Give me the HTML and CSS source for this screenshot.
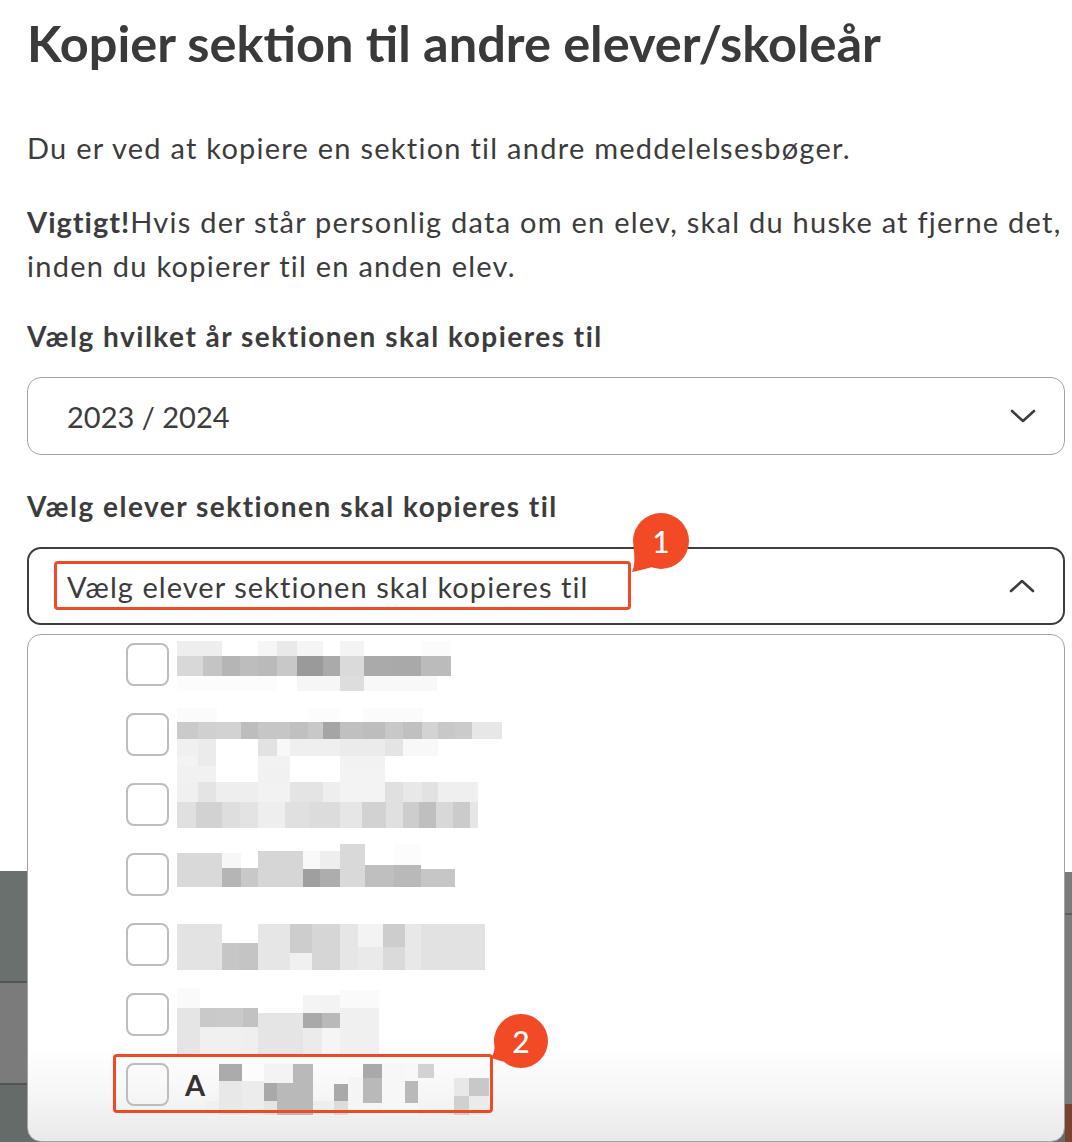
FILE: index.html
```html
<!DOCTYPE html>
<html lang="da">
<head>
<meta charset="utf-8">
<title>Kopier sektion</title>
<link rel="stylesheet" href="styles.css">
</head>
<body>
<main class="modal">
  <h1 class="title">Kopier sektion til andre elever/skoleår</h1>
  <p class="text intro">Du er ved at kopiere en sektion til andre meddelelsesbøger.</p>
  <p class="text warn"><strong class="strong">Vigtigt!</strong>Hvis der står personlig data om en elev, skal du huske at fjerne det, inden du kopierer til en anden elev.</p>

  <label class="label label-year">Vælg hvilket år sektionen skal kopieres til</label>
  <div class="select select-year">
    <span class="select-value">2023 / 2024</span>
    <svg class="chev" viewBox="0 0 26 14" width="26" height="14"><path d="M2 2 L13 12 L24 2" /></svg>
  </div>

  <label class="label label-students">Vælg elever sektionen skal kopieres til</label>
  <div class="select select-students">
    <span class="select-value placeholder">Vælg elever sektionen skal kopieres til</span>
    <svg class="chev" viewBox="0 0 26 14" width="26" height="14"><path d="M2 12 L13 2 L24 12" /></svg>
    <div class="annot annot-1"></div>
    <div class="badge badge-1">
      <svg viewBox="0 0 62 62" width="62" height="62"><circle cx="33" cy="29" r="28"/><path d="M5.4 33.9 Q 8 52 4 60 Q 14 58 23.4 55.3 Z"/></svg>
      <span class="badge-num">1</span>
    </div>
  </div>

  <div class="panel">
    <ul class="list">
      <li class="row">
        <span class="box"></span>
        <svg class="pix" viewBox="0 0 330 64" width="330" height="64">
          <rect x="0" y="9" width="45" height="15" fill="#eeeeee"/><rect x="81" y="9" width="19" height="15" fill="#f6f6f6"/><rect x="100" y="9" width="20" height="15" fill="#e9e9e9"/><rect x="120" y="9" width="26" height="15" fill="#f5f5f5"/><rect x="163" y="9" width="24" height="15" fill="#f4f4f4"/><rect x="244" y="9" width="30" height="15" fill="#fbfbfb"/>
          <rect x="0" y="24" width="26" height="20" fill="#d8d8d8"/><rect x="26" y="24" width="19" height="20" fill="#c4c4c4"/><rect x="45" y="24" width="18" height="20" fill="#b5b5b5"/><rect x="63" y="24" width="18" height="20" fill="#bdbdbd"/><rect x="81" y="24" width="19" height="20" fill="#bababa"/><rect x="100" y="24" width="20" height="20" fill="#c8c8c8"/><rect x="120" y="24" width="26" height="20" fill="#9a9a9a"/><rect x="146" y="24" width="17" height="20" fill="#aaaaaa"/><rect x="163" y="24" width="24" height="20" fill="#dadada"/><rect x="187" y="24" width="29" height="20" fill="#aaaaaa"/><rect x="216" y="24" width="28" height="20" fill="#a9a9a9"/><rect x="244" y="24" width="30" height="20" fill="#bbbbbb"/>
          <rect x="0" y="44" width="100" height="15" fill="#fcfcfc"/><rect x="120" y="44" width="43" height="15" fill="#f6f6f6"/><rect x="163" y="44" width="24" height="15" fill="#dddddd"/><rect x="187" y="44" width="73" height="15" fill="#f8f8f8"/>
        </svg>
      </li>
      <li class="row">
        <span class="box"></span>
        <svg class="pix" viewBox="0 0 330 64" width="330" height="64">
          <rect x="0" y="6" width="40" height="14" fill="#fbfbfb"/><rect x="131" y="6" width="32" height="14" fill="#fcfcfc"/><rect x="186" y="6" width="60" height="14" fill="#fbfbfb"/>
          <rect x="0" y="20" width="21" height="17" fill="#cacaca"/><rect x="21" y="20" width="18" height="17" fill="#d0d0d0"/><rect x="39" y="20" width="25" height="17" fill="#d2d2d2"/><rect x="64" y="20" width="17" height="17" fill="#bdbdbd"/><rect x="81" y="20" width="19" height="17" fill="#c6c6c6"/><rect x="100" y="20" width="13" height="17" fill="#c6c6c6"/><rect x="113" y="20" width="18" height="17" fill="#c0c0c0"/><rect x="131" y="20" width="15" height="17" fill="#c8c8c8"/><rect x="146" y="20" width="17" height="17" fill="#a5a5a5"/><rect x="163" y="20" width="23" height="17" fill="#c0c0c0"/><rect x="186" y="20" width="22" height="17" fill="#bdbdbd"/><rect x="208" y="20" width="18" height="17" fill="#c8c8c8"/><rect x="226" y="20" width="19" height="17" fill="#c0c0c0"/><rect x="245" y="20" width="16" height="17" fill="#d3d3d3"/><rect x="261" y="20" width="17" height="17" fill="#c8c8c8"/><rect x="278" y="20" width="17" height="17" fill="#cbcbcb"/><rect x="295" y="20" width="30" height="17" fill="#e7e7e7"/>
          <rect x="0" y="37" width="21" height="17" fill="#f0f0f0"/><rect x="21" y="37" width="18" height="30" fill="#ebebeb"/><rect x="81" y="37" width="19" height="17" fill="#e2e2e2"/><rect x="100" y="37" width="13" height="17" fill="#f8f8f8"/><rect x="113" y="37" width="50" height="17" fill="#efefef"/><rect x="163" y="37" width="45" height="17" fill="#ebebeb"/><rect x="208" y="37" width="18" height="17" fill="#e4e4e4"/><rect x="226" y="37" width="35" height="17" fill="#f8f8f8"/>
          <rect x="0" y="54" width="21" height="14" fill="#f3f3f3"/><rect x="81" y="54" width="32" height="14" fill="#f2f2f2"/><rect x="163" y="54" width="45" height="14" fill="#f2f2f2"/>
        </svg>
      </li>
      <li class="row">
        <span class="box"></span>
        <svg class="pix" viewBox="0 0 330 64" width="330" height="64">
          <rect x="0" y="-6" width="39" height="16" fill="#f1f1f1"/><rect x="81" y="-6" width="32" height="16" fill="#f1f1f1"/><rect x="163" y="-6" width="45" height="16" fill="#f3f3f3"/>
          <rect x="0" y="10" width="21" height="20" fill="#f0f0f0"/><rect x="21" y="10" width="18" height="20" fill="#e4e4e4"/><rect x="39" y="10" width="42" height="20" fill="#eeeeee"/><rect x="81" y="10" width="32" height="20" fill="#f2f2f2"/><rect x="113" y="10" width="33" height="20" fill="#e4e4e4"/><rect x="146" y="10" width="17" height="20" fill="#eeeeee"/><rect x="163" y="10" width="45" height="20" fill="#f3f3f3"/><rect x="208" y="10" width="18" height="20" fill="#e0e0e0"/><rect x="226" y="10" width="19" height="20" fill="#e8e8e8"/><rect x="245" y="10" width="16" height="20" fill="#e2e2e2"/><rect x="261" y="10" width="40" height="20" fill="#efefef"/>
          <rect x="0" y="30" width="19" height="26" fill="#e0e0e0"/><rect x="19" y="30" width="26" height="26" fill="#d2d2d2"/><rect x="45" y="30" width="18" height="26" fill="#dedede"/><rect x="63" y="30" width="18" height="26" fill="#e3e3e3"/><rect x="81" y="30" width="27" height="26" fill="#eeeeee"/><rect x="108" y="30" width="24" height="26" fill="#e0e0e0"/><rect x="132" y="30" width="31" height="26" fill="#dcdcdc"/><rect x="163" y="30" width="22" height="26" fill="#e6e6e6"/><rect x="185" y="30" width="24" height="26" fill="#d2d2d2"/><rect x="209" y="30" width="17" height="26" fill="#e0e0e0"/><rect x="226" y="30" width="16" height="26" fill="#cdcdcd"/><rect x="242" y="30" width="17" height="26" fill="#bfbfbf"/><rect x="259" y="30" width="17" height="26" fill="#d8d8d8"/><rect x="276" y="30" width="17" height="26" fill="#cbcbcb"/><rect x="293" y="30" width="8" height="26" fill="#e6e6e6"/>
        </svg>
      </li>
      <li class="row">
        <span class="box"></span>
        <svg class="pix" viewBox="0 0 330 64" width="330" height="64">
          <rect x="0" y="11" width="45" height="34" fill="#d9d9d9"/><rect x="45" y="11" width="19" height="15" fill="#f7f7f7"/><rect x="45" y="26" width="19" height="19" fill="#b5b5b5"/><rect x="64" y="26" width="17" height="19" fill="#c8c8c8"/><rect x="81" y="9" width="45" height="36" fill="#d6d6d6"/><rect x="126" y="9" width="17" height="18" fill="#f9f9f9"/><rect x="126" y="27" width="17" height="18" fill="#9f9f9f"/><rect x="143" y="9" width="20" height="18" fill="#eeeeee"/><rect x="143" y="27" width="20" height="18" fill="#adadad"/><rect x="163" y="2" width="25" height="43" fill="#d9d9d9"/><rect x="188" y="23" width="29" height="22" fill="#bfbfbf"/><rect x="217" y="2" width="27" height="21" fill="#fcfcfc"/><rect x="217" y="23" width="27" height="22" fill="#b9b9b9"/><rect x="244" y="27" width="34" height="18" fill="#c6c6c6"/>
        </svg>
      </li>
      <li class="row">
        <span class="box"></span>
        <svg class="pix" viewBox="0 0 330 64" width="330" height="64">
          <rect x="0" y="12" width="45" height="46" fill="#e3e3e3"/><rect x="45" y="31" width="17" height="27" fill="#c6c6c6"/><rect x="62" y="31" width="19" height="27" fill="#c4c4c4"/><rect x="81" y="12" width="32" height="46" fill="#e6e6e6"/><rect x="113" y="12" width="22" height="29" fill="#cdcdcd"/><rect x="113" y="41" width="22" height="17" fill="#f0f0f0"/><rect x="135" y="12" width="28" height="46" fill="#d6d6d6"/><rect x="163" y="12" width="18" height="46" fill="#e6e6e6"/><rect x="181" y="12" width="25" height="23" fill="#f3f3f3"/><rect x="181" y="35" width="25" height="23" fill="#eaeaea"/><rect x="206" y="12" width="22" height="23" fill="#cdcdcd"/><rect x="206" y="35" width="22" height="23" fill="#dadada"/><rect x="228" y="12" width="16" height="46" fill="#e8e8e8"/><rect x="244" y="12" width="64" height="46" fill="#e2e2e2"/>
        </svg>
      </li>
      <li class="row">
        <span class="box"></span>
        <svg class="pix" viewBox="0 0 330 64" width="330" height="64">
          <rect x="0" y="6" width="23" height="20" fill="#fafafa"/><rect x="0" y="26" width="23" height="47" fill="#e5e5e5"/><rect x="23" y="26" width="17" height="19" fill="#c9c9c9"/><rect x="23" y="45" width="17" height="28" fill="#f0f0f0"/><rect x="40" y="26" width="26" height="19" fill="#cacaca"/><rect x="40" y="45" width="26" height="28" fill="#f0f0f0"/><rect x="66" y="26" width="15" height="19" fill="#c2c2c2"/><rect x="66" y="45" width="15" height="28" fill="#efefef"/><rect x="81" y="31" width="45" height="42" fill="#e5e5e5"/><rect x="126" y="13" width="19" height="18" fill="#f4f4f4"/><rect x="126" y="31" width="19" height="15" fill="#a9a9a9"/><rect x="126" y="46" width="19" height="27" fill="#ebebeb"/><rect x="145" y="13" width="18" height="18" fill="#f3f3f3"/><rect x="145" y="31" width="18" height="15" fill="#b9b9b9"/><rect x="145" y="46" width="18" height="27" fill="#f5f5f5"/><rect x="163" y="8" width="39" height="18" fill="#fafafa"/><rect x="163" y="26" width="39" height="47" fill="#f0f0f0"/>
        </svg>
      </li>
      <li class="row">
        <div class="item">
          <span class="box"></span>
          <span class="initial">A</span>
          <svg class="pix pix-last" viewBox="0 0 290 64" width="290" height="64">
            <rect x="0" y="49" width="13" height="14" fill="#f0f0f0"/><rect x="13" y="12" width="23" height="17" fill="#ababab"/><rect x="13" y="29" width="23" height="34" fill="#e8e8e8"/><rect x="36" y="12" width="22" height="17" fill="#fcfcfc"/><rect x="36" y="29" width="22" height="34" fill="#ececec"/><rect x="58" y="12" width="13" height="19" fill="#f3f3f3"/><rect x="58" y="31" width="13" height="18" fill="#a9a9a9"/><rect x="58" y="49" width="13" height="14" fill="#e4e4e4"/><rect x="71" y="12" width="16" height="19" fill="#f3f3f3"/><rect x="71" y="31" width="16" height="32" fill="#b9b9b9"/><rect x="87" y="12" width="20" height="51" fill="#b9b9b9"/><rect x="107" y="49" width="21" height="14" fill="#eeeeee"/><rect x="128" y="32" width="14" height="17" fill="#a9a9a9"/><rect x="128" y="49" width="14" height="14" fill="#dcdcdc"/><rect x="142" y="25" width="15" height="38" fill="#f5f5f5"/><rect x="157" y="12" width="19" height="14" fill="#a9a9a9"/><rect x="157" y="26" width="19" height="25" fill="#b9b9b9"/><rect x="157" y="51" width="19" height="12" fill="#f5f5f5"/><rect x="176" y="12" width="23" height="51" fill="#f7f7f7"/><rect x="199" y="12" width="13" height="17" fill="#f8f8f8"/><rect x="199" y="29" width="13" height="22" fill="#b9b9b9"/><rect x="199" y="51" width="13" height="12" fill="#f7f7f7"/><rect x="212" y="12" width="16" height="14" fill="#d2d2d2"/><rect x="248" y="26" width="15" height="18" fill="#e8e8e8"/><rect x="248" y="44" width="15" height="19" fill="#d0d0d0"/><rect x="263" y="26" width="20" height="18" fill="#c8c8c8"/><rect x="263" y="44" width="20" height="19" fill="#ebebeb"/>
          </svg>
          <div class="annot annot-2"></div>
          <div class="badge badge-2">
            <svg viewBox="0 0 60 60" width="60" height="60"><circle cx="31" cy="29" r="27"/><path d="M4.4 24.3 Q 6 40 1 46 Q 8 48 13.6 49.7 Z"/></svg>
            <span class="badge-num">2</span>
          </div>
        </div>
      </li>
    </ul>
  </div>
</main>
</body>
</html>
```

FILE: styles.css
```css
html {
  background:
    linear-gradient(to bottom, #ffffff 0, #ffffff 872px, #7b7b7b 872px, #7b7b7b 913px, #5e5e5e 913px, #5e5e5e 915px, #7b7b7b 915px, #7b7b7b 1104px, #7a4232 1104px) right top / 7px 100% no-repeat,
    linear-gradient(to bottom, #ffffff 0, #ffffff 871px, #6a706e 871px, #6a706e 981px, #545454 981px, #545454 983px, #7b7b7b 983px, #7b7b7b 1083px, #545454 1083px, #545454 1085px, #656b69 1085px);
}

body {
  margin: 0;
  height: 1142px;
  overflow: hidden;
  font-family: Lato, "Noto Sans", sans-serif;
  color: #3c3c3c;
}

.modal {
  padding: 0 7px 0 27px;
  display: flex;
  flex-direction: column;
}

.title {
  margin: 0;
  padding-top: 13px;
  font-size: 50.5px;
  line-height: 60px;
  font-weight: 700;
  color: #3a3a3a;
}

.text {
  margin: 0;
  font-size: 29px;
  line-height: 44px;
  letter-spacing: 1.25px;
}

.intro {
  margin-top: 53px;
}

.warn {
  margin-top: 30px;
}

.strong {
  font-weight: 700;
  letter-spacing: 1px;
}

.label {
  display: block;
  font-size: 28px;
  line-height: 44px;
  font-weight: 700;
  letter-spacing: 1.5px;
}

.label-year {
  margin-top: 26px;
}

.label-students {
  margin-top: 29px;
}

.select {
  position: relative;
  margin-top: 19px;
  height: 78px;
  box-sizing: border-box;
  border-radius: 14px;
  display: flex;
  align-items: center;
  justify-content: space-between;
  padding: 0 28px 0 39px;
}

.select-year {
  border: 1.5px solid #a3a3a3;
}

.select-students {
  border: 2px solid #3d3d3d;
  padding-left: 38px;
}

.select-value {
  font-size: 29px;
  color: #3c3c3c;
}

.placeholder {
  letter-spacing: 1.05px;
}

.chev {
  width: 26px;
  height: 14px;
  fill: none;
  stroke: #3d3d3d;
  stroke-width: 2.6;
  stroke-linecap: round;
  stroke-linejoin: round;
}

.annot {
  position: absolute;
  border: 3px solid #f04a24;
  border-radius: 4px;
  box-sizing: border-box;
  pointer-events: none;
}

.annot-1 {
  left: 25px;
  top: 12px;
  width: 577px;
  height: 49px;
}

.badge {
  position: absolute;
  z-index: 2;
}

.badge svg {
  display: block;
  fill: #f24a25;
}

.badge-num {
  position: absolute;
  width: 56px;
  height: 56px;
  display: flex;
  align-items: center;
  justify-content: center;
  color: #ffffff;
  font-size: 30px;
  font-weight: 500;
  line-height: 1;
}

.badge-1 {
  left: 599px;
  top: -37px;
}

.badge-1 .badge-num {
  left: 5px;
  top: 1px;
}

.badge-2 {
  left: 364px;
  top: -40px;
}

.badge-2 .badge-num {
  left: 3px;
  top: 1px;
}

.panel {
  margin-top: 9px;
  height: 508px;
  box-sizing: border-box;
  border: 1.5px solid #a3a3a3;
  border-radius: 14px;
  background: linear-gradient(to bottom, #ffffff 0, #ffffff 410px, #f6f6f6 460px, #e9e9e9 506px);
}

.list {
  list-style: none;
  margin: -6px 0 0 0;
  padding: 0 0 0 98px;
}

.row {
  height: 70px;
  display: flex;
  align-items: center;
}

.item {
  position: relative;
  display: flex;
  align-items: center;
}

.box {
  flex: none;
  width: 43px;
  height: 43px;
  box-sizing: border-box;
  border: 2px solid #bdbdbd;
  border-radius: 8px;
  background: transparent;
}

.pix {
  margin-left: 8px;
  overflow: visible;
  flex: none;
}

.initial {
  margin-left: 16px;
  font-size: 29px;
  font-weight: 700;
  color: #333333;
}

.pix-last {
  margin-left: 1px;
}

.annot-2 {
  left: -13px;
  top: 2px;
  width: 380px;
  height: 59px;
}
```
